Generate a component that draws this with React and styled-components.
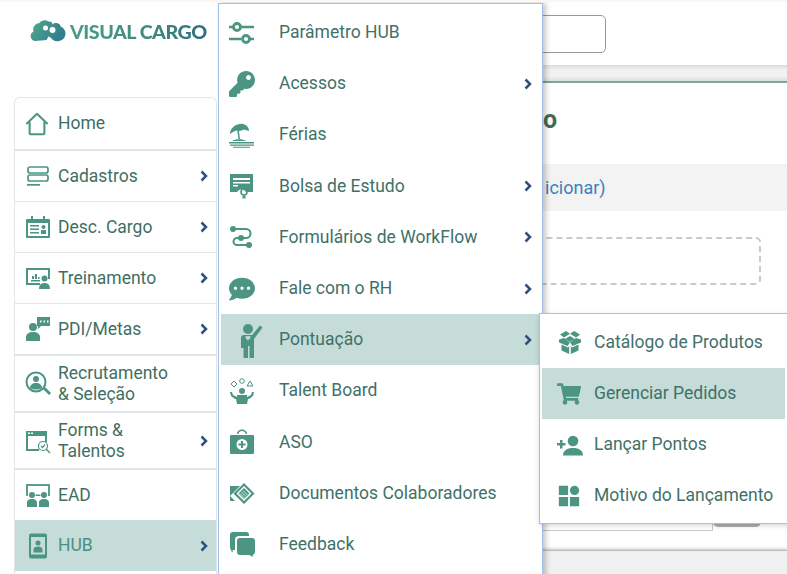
import React from "react";
import styled, { createGlobalStyle } from "styled-components";
import { FaKey, FaCommentDots, FaShoppingCart } from "react-icons/fa";

const ICON = "#4b9582";

const Svg = ({ children, size = 26 }) => (
  <svg width={size} height={size} viewBox="0 0 26 26" fill={ICON}>
    {children}
  </svg>
);

const HomeIcon = () => (
  <Svg size={24}>
    <path d="M1.500 13 13 2l11.500 11M5 10.500V23a1 1 0 0 0 1 1h14a1 1 0 0 0 1-1V10.500" fill="none" stroke={ICON} strokeWidth="2.200" strokeLinejoin="round" />
  </Svg>
);
const CadastrosIcon = () => (
  <Svg>
    <rect x="3" y="4" width="20" height="6" rx="2" fill="none" stroke={ICON} strokeWidth="1.700" />
    <rect x="3" y="12" width="20" height="6" rx="2" fill="none" stroke={ICON} strokeWidth="1.700" />
    <rect x="2" y="21" width="13" height="1.700" />
  </Svg>
);
const CargoIcon = () => (
  <Svg>
    <path d="M6 2h2v4H6zM18 2h2v4h-2z" />
    <path fillRule="evenodd" d="M2 5h22a1 1 0 0 1 1 1v17a1 1 0 0 1-1 1H2a1 1 0 0 1-1-1V6a1 1 0 0 1 1-1zm1 4v13h20V9z" />
    <path d="M5 11h9v1.500H5zM5 14.500h9V16H5zM5 18h9v1.500H5z" />
    <circle cx="18.500" cy="13" r="2" />
    <path d="M16 16h5v4h-5z" />
  </Svg>
);
const TreinoIcon = () => (
  <Svg>
    <path fillRule="evenodd" d="M1 3h24v11h-2V5H3v13h12v2H1z" />
    <path d="M6 15h9v1.500H6zM7 11h2v3H7zM10 9h2v5h-2zM13 12h1.500v2H13z" />
    <circle cx="19.500" cy="13.500" r="3" />
    <path d="M14 24c0-4 2-6 5.500-6s5.500 2 5.500 6z" />
  </Svg>
);
const PdiIcon = () => (
  <Svg>
    <circle cx="8" cy="11" r="4" />
    <path d="M1 25v-4c0-3 3-5 7-5s7 2 7 5v4z" />
    <path fillRule="evenodd" d="M12 1h13v9h-9l-3 3v-3h-1zm3 3.500v2h1.500v-2zm3.500 0v2H20v-2zm3.500 0v2h1.500v-2z" />
  </Svg>
);
const RecrutaIcon = () => (
  <Svg>
    <circle cx="11" cy="11" r="9.500" fill="none" stroke={ICON} strokeWidth="2" />
    <circle cx="11" cy="8" r="3" />
    <path d="M5 17c0-3 2.500-5 6-5s6 2 6 5c-3 2-9 2-12 0z" />
    <path d="m18 18 2-2 6 6-2 2z" />
  </Svg>
);
const FormsIcon = () => (
  <Svg>
    <path fillRule="evenodd" d="M1 3h21v11h-2V8H3v13h11v2H1zm2 1.500V6h2V4.500zm3 0V6h2V4.500z" />
    <circle cx="18" cy="18" r="4.500" fill="#fff" stroke={ICON} strokeWidth="1.200" />
    <path d="m16 18 1.500 1.500 2.500-3" fill="none" stroke={ICON} strokeWidth="1.200" />
    <path d="m21 21 4 4" stroke={ICON} strokeWidth="1.500" />
  </Svg>
);
const EadIcon = () => (
  <Svg>
    <path d="M1 2h24v12h-2V4H3v10H1z" opacity=".9" />
    <circle cx="7" cy="13" r="3" />
    <circle cx="19" cy="13" r="3" />
    <path d="M2 25v-4c0-3 2-4 5-4s5 1 5 4v4zM14 25v-4c0-3 2-4 5-4s5 1 5 4v4zM10.500 12.500h5V14h-5z" />
  </Svg>
);
const HubIcon = () => (
  <Svg>
    <path fillRule="evenodd" d="M6 .500h14a2 2 0 0 1 2 2v21a2 2 0 0 1-2 2H6a2 2 0 0 1-2-2v-21a2 2 0 0 1 2-2zM6 4v17.500h14V4z" />
    <circle cx="13" cy="10" r="2.500" />
    <path d="M8.500 19.500V16.500c0-2 2-3 4.500-3s4.500 1 4.500 3v3z" />
  </Svg>
);

const SlidersIcon = () => (
  <Svg>
    <path d="M10 5.800h15v2.500H10zM0 5.800h4v2.500H0zM0 17.800h12v2.500H0zM21 17.800h4v2.500h-4z" />
    <circle cx="8" cy="7" r="3.500" fill="none" stroke={ICON} strokeWidth="2.800" />
    <circle cx="17" cy="19" r="3.500" fill="none" stroke={ICON} strokeWidth="2.800" />
  </Svg>
);
const BeachIcon = () => (
  <Svg>
    <path d="M1 12C1 5 9 1 14 2c4 1 6 4 6 7l-5-1.500L11 9l-4-.500L4 10z" />
    <path d="m8 7 1.600-.3L11 17H9.500z" />
    <path d="M3 19c3-2.500 11-2.500 14 0z" />
    <path d="M0 20h25v1.400H0zM1 22.400h24v1.300H1zM4 24.700h17v1H4z" />
  </Svg>
);
const CertIcon = () => (
  <Svg>
    <path fillRule="evenodd" d="M1 1h23v18h-7a5 5 0 0 0-9 0H1zm3 4v2h17V5zm0 4v1.500h17V9zm0 3v1.500h5V12z" />
    <circle cx="15" cy="19" r="3" fill="none" stroke={ICON} strokeWidth="1.600" />
    <path d="M13.500 22.500h3V26l-1.500-1-1.500 1z" />
  </Svg>
);
const FlowIcon = () => (
  <Svg>
    <path d="M4 5h13a4.500 4.500 0 0 1 0 9H8a3.500 3.500 0 0 0 0 7h12" fill="none" stroke={ICON} strokeWidth="2" />
    <circle cx="4" cy="5" r="3" />
    <circle cx="12" cy="14" r="3" />
    <circle cx="20" cy="21" r="3" />
  </Svg>
);
const PointsIcon = () => (
  <svg width="34" height="36" viewBox="-8 0 34 36" fill={ICON}>
    <circle cx="11" cy="7" r="5" />
    <path d="M4 16q0-3 3-3h8L23 3.500l2.500 2L17 17v19h-4.500V24H11v12H6.500V26H4z" />
    <path d="M8.500 14.500c1-1 2.500-.5 2.500.3 0-.8 1.500-1.300 2.500-.3.600 1-1.200 2.800-2.500 3.700-1.300-.9-3.100-2.700-2.500-3.700z" fill="#c5dcd8" />
  </svg>
);
const TalentIcon = () => (
  <Svg>
    <path d="m5 3 3 3-3 3-3-3z" fill="none" stroke={ICON} strokeWidth="1" />
    <circle cx="13" cy="3" r="2.300" fill="none" stroke={ICON} strokeWidth="1" />
    <path d="m21 3 3 5h-6z" fill="none" stroke={ICON} strokeWidth="1" />
    <circle cx="13" cy="13" r="3" />
    <path d="M8 26v-7l-4-2-1-3H1l1 4 4 3h1zM18 26v-7l4-2 1-3h2l-1 4-4 3h-1zM8 17h10v9H8z" />
  </Svg>
);
const KitIcon = () => (
  <Svg>
    <path d="M8 5c0-6 10-6 10 0h-1.500c0-4-7-4-7 0z" />
    <path fillRule="evenodd" d="M2 6h22a1 1 0 0 1 1 1v17a1 1 0 0 1-1 1H2a1 1 0 0 1-1-1V7a1 1 0 0 1 1-1zm11 4a5.500 5.500 0 1 0 0 11 5.500 5.500 0 0 0 0-11zm-1 2h2v2.500h2.500v2H14V19h-2v-2.500H9.500v-2H12z" />
  </Svg>
);
const DocsIcon = () => (
  <Svg>
    <path d="M1 6h10L1 16zM1 16l5 5H1z" />
    <path fillRule="evenodd" d="m15 3 10.500 10.500L15 24 4.500 13.500zM15 6 7.500 13.500 15 21l7.500-7.500z" />
    <path d="m15 8 5.500 5.500L15 19l-5.500-5.500z" />
    <path d="m12.500 12 4.500 4.500M14 10.500l4.500 4.500M11 13.500l4.500 4.500" stroke="#fff" strokeWidth=".8" />
  </Svg>
);
const BubblesIcon = () => (
  <Svg>
    <path d="M4 1h13a3 3 0 0 1 3 3v1H10a4 4 0 0 0-4 4v10H4l-1 3-1-3.200A3 3 0 0 1 1 16V4a3 3 0 0 1 3-3z" />
    <path d="M11 7h12a3 3 0 0 1 3 3v11a3 3 0 0 1-2 2.800l-.5 2.200-3-2H11a3 3 0 0 1-3-3V10a3 3 0 0 1 3-3z" />
  </Svg>
);
const BoxIcon = () => (
  <Svg>
    <path d="M3 4.500 9 1l4 2.800-6 3.700zM23 4.500 17 1l-4 2.800 6 3.700zM13 6l5 3-5 3-5-3z" />
    <path d="M2 9.500 7 8l6 4.500L10.500 16 2 12.500zM24 9.500 19 8l-6 4.500 2.500 3.500 8.500-3.500z" />
    <path d="M4.500 14.500l6.500 3 1.200-1.500V24l-7.700-3.500zM21.500 14.500 15 17.500 13.800 16V24l7.700-3.500z" />
  </Svg>
);
const UserPlusIcon = () => (
  <Svg>
    <circle cx="16" cy="9" r="5.300" />
    <path d="M6 23.500c0-5 4-7.500 10-7.500s10 2.500 10 7.500z" />
    <path d="M0 11h3V8h2.500v3h3v2.500h-3v3H3v-3H0z" />
  </Svg>
);
const GridIcon = () => (
  <Svg size={24}>
    <path d="M2 2h10v10H2zM2 14h10v10H2zM14 14h10v10H14z" />
    <circle cx="19" cy="7" r="5" />
  </Svg>
);

const sideItems = [
  { label: "Home", icon: HomeIcon, height: 53, rule: 2 },
  { label: "Cadastros", icon: CadastrosIcon, more: true, height: 51, rule: 1 },
  { label: "Desc. Cargo", icon: CargoIcon, more: true, height: 51, rule: 1 },
  { label: "Treinamento", icon: TreinoIcon, more: true, height: 51, rule: 1 },
  { label: "PDI/Metas", icon: PdiIcon, more: true, height: 52, rule: 2 },
  { label: "Recrutamento\n& Seleção", icon: RecrutaIcon, height: 57, rule: 2 },
  { label: "Forms &\nTalentos", icon: FormsIcon, more: true, height: 57, rule: 2 },
  { label: "EAD", icon: EadIcon, height: 50, rule: 0 },
  { label: "HUB", icon: HubIcon, more: true, active: true, height: 51, rule: 0 },
];

const hubItems = [
  { label: "Parâmetro HUB", icon: SlidersIcon },
  { label: "Acessos", icon: () => <FaKey size={26} color={ICON} />, more: true },
  { label: "Férias", icon: BeachIcon },
  { label: "Bolsa de Estudo", icon: CertIcon, more: true },
  { label: "Formulários de WorkFlow", icon: FlowIcon, more: true },
  { label: "Fale com o RH", icon: () => <FaCommentDots size={26} color={ICON} />, more: true },
  { label: "Pontuação", icon: PointsIcon, more: true, active: true },
  { label: "Talent Board", icon: TalentIcon },
  { label: "ASO", icon: KitIcon },
  { label: "Documentos Colaboradores", icon: DocsIcon },
  { label: "Feedback", icon: BubblesIcon },
];

const pointItems = [
  { label: "Catálogo de Produtos", icon: BoxIcon },
  { label: "Gerenciar Pedidos", icon: () => <FaShoppingCart size={24} color={ICON} />, active: true },
  { label: "Lançar Pontos", icon: UserPlusIcon },
  { label: "Motivo do Lançamento", icon: GridIcon },
];

const Chevron = () => (
  <svg width="8" height="12" viewBox="0 0 8 12">
    <path d="M1.500 1.500 6 6l-4.500 4.500" fill="none" stroke="#2f5080" strokeWidth="2.500" />
  </svg>
);

export default function App() {
  return (
    <>
      <GlobalStyle />
      <Page>
        <TopBar>
          <Logo>
            <LogoMark viewBox="0 0 36 24">
              <defs>
                <linearGradient id="logoFill" x1="0" y1="0" x2="1" y2="0.4">
                  <stop offset="0" stopColor="#55a78d" />
                  <stop offset="1" stopColor="#2f7f8c" />
                </linearGradient>
              </defs>
              <path d="M5 22a5 5 0 0 1-2-9.500A6.500 6.500 0 0 1 9 4c2-3 6-3.500 9-1.500 3-.5 4 1 4 3 3-3 8-1 8 2 3 1 5 4 5 7a8 8 0 0 1-13 6c-2-2-3-3-4-3l-2 3.500z" fill="url(#logoFill)" />
              <circle cx="15" cy="9" r="2.500" fill="#fff" />
              <circle cx="22" cy="11" r="3" fill="#fff" />
              <circle cx="28" cy="7" r="1.500" fill="#2f7f8c" />
            </LogoMark>
            <LogoText>VISUAL CARGO</LogoText>
          </Logo>
          <SearchBox />
        </TopBar>
        <Body>
          <Sidebar>
            {sideItems.map((item) => (
              <SideRow key={item.label} $height={item.height} $rule={item.rule} $active={item.active}>
                <SideIcon><item.icon /></SideIcon>
                <SideLabel $active={item.active}>{item.label}</SideLabel>
                {item.more && <Chevron />}
              </SideRow>
            ))}
          </Sidebar>
          <Content>
            <Strip />
            <Heading>o</Heading>
            <Band>icionar)</Band>
            <DashedBox />
            <FormRow>
              <FormInput />
              <FormButton />
            </FormRow>
            <Footer />
          </Content>
        </Body>
        <HubMenu>
          {hubItems.map((item) => (
            <MenuRow key={item.label} $active={item.active}>
              <MenuIcon><item.icon /></MenuIcon>
              <MenuLabel>{item.label}</MenuLabel>
              {item.more && <Chevron />}
            </MenuRow>
          ))}
        </HubMenu>
        <PointsMenu>
          {pointItems.map((item) => (
            <SubRow key={item.label} $active={item.active}>
              <SubIcon><item.icon /></SubIcon>
              <MenuLabel>{item.label}</MenuLabel>
            </SubRow>
          ))}
        </PointsMenu>
      </Page>
    </>
  );
}

const GlobalStyle = createGlobalStyle`
  html, body {
    margin: 0;
    padding: 0;
    background: #fff;
    font-family: Roboto, "Liberation Sans", sans-serif;
  }
`;
const Page = styled.div`
  position: relative;
  width: 787px;
  height: 574px;
  overflow: hidden;
  background: #fff;
  border-top: 2px solid #fdf5f4;
  box-sizing: border-box;
`;
const TopBar = styled.div`
  height: 63px;
  display: flex;
  position: relative;
`;
const Logo = styled.div`
  display: flex;
  align-items: center;
  gap: 3px;
  height: 58px;
  padding-left: 30px;
`;
const LogoMark = styled.svg`
  width: 37px;
  height: 24px;
`;
const LogoText = styled.span`
  font-family: Lato, sans-serif;
  font-weight: 900;
  font-size: 19.700px;
  white-space: nowrap;
  letter-spacing: -0.5px;
  background: linear-gradient(90deg, #4b9c86 0%, #3f8f80 50%, #2f7180 100%);
  -webkit-background-clip: text;
  background-clip: text;
  color: transparent;
`;
const SearchBox = styled.div`
  position: absolute;
  left: 400px;
  top: 13px;
  width: 204px;
  height: 36px;
  border: 1px solid #999;
  border-radius: 5px;
`;
const Body = styled.div`
  display: flex;
  height: 509px;
`;
const Sidebar = styled.nav`
  flex: none;
  width: 201px;
  height: 520px;
  margin: 32px 0 0 14px;
  border: 1px solid #e2e6e6;
  border-bottom: 0;
  border-radius: 6px 6px 0 0;
  display: flex;
  flex-direction: column;
`;
const SideRow = styled.div`
  flex: none;
  display: flex;
  align-items: center;
  height: ${(p) => p.$height}px;
  padding: 0 8px 0 10px;
  box-sizing: border-box;
  border-bottom: ${(p) => p.$rule}px solid #e2e6e6;
  background: ${(p) => (p.$active ? "#c5dcd8" : "transparent")};
`;
const SideIcon = styled.span`
  flex: none;
  width: 33px;
  display: flex;
  align-items: center;
  justify-content: flex-start;
`;
const SideLabel = styled.span`
  flex: 1;
  white-space: pre-line;
  font-size: 17.500px;
  line-height: 21px;
  color: ${(p) => (p.$active ? "#4b8f80" : "#3f6f64")};
`;
const Content = styled.main`
  flex: 1;
  min-width: 0;
  margin-left: 5px;
  display: flex;
  flex-direction: column;
`;
const Strip = styled.div`
  flex: none;
  height: 16px;
  background: linear-gradient(#dcdcdc, #f1f1f1 30%, #f1f1f1 70%, #dedede);
  border-bottom: 2px solid #7ba793;
`;
const Heading = styled.h1`
  flex: none;
  box-sizing: border-box;
  margin: 0;
  height: 81px;
  padding: 0 0 8px 321px;
  display: flex;
  align-items: center;
  font-size: 25px;
  font-weight: 700;
  color: #466a55;
`;
const Band = styled.div`
  flex: none;
  height: 47px;
  padding-left: 323px;
  display: flex;
  align-items: center;
  background: #f3f3f3;
  color: #3c80bd;
  font-size: 18px;
`;
const DashedBox = styled.div`
  flex: none;
  height: 44px;
  margin: 26px 26px 0 0;
  border: 2px dashed #cacaca;
  border-radius: 5px;
`;
const FormRow = styled.div`
  flex: none;
  display: flex;
  height: 41px;
  margin: 205px 26px 0 0;
`;
const FormInput = styled.div`
  flex: 1;
  border: 1px solid #c9c9c9;
`;
const FormButton = styled.div`
  flex: none;
  width: 48px;
  height: 37px;
  background: #aeaeae;
  border-radius: 0 0 5px 5px;
`;
const Footer = styled.div`
  flex: 1;
  margin-top: 19px;
  border-top: 1px solid #bdbdbd;
  box-shadow: 0 -1px 3px rgba(0, 0, 0, 0.25);
  background: linear-gradient(105deg, #f7f8f8 0 40%, #eff0f0 40%);
`;
const HubMenu = styled.div`
  position: absolute;
  left: 218px;
  top: 1px;
  width: 325px;
  height: 580px;
  padding: 3px 0 0 2px;
  box-sizing: border-box;
  background: #fff;
  border: 1px solid #a4c0ea;
  box-shadow: 3px 0 5px rgba(0, 0, 0, 0.22);
`;
const MenuRow = styled.div`
  display: flex;
  align-items: center;
  height: 51.200px;
  padding: 0 10px 0 8px;
  background: ${(p) => (p.$active ? "#c5dcd8" : "transparent")};
`;
const MenuIcon = styled.span`
  flex: none;
  width: 50px;
  display: flex;
  align-items: center;
  justify-content: flex-start;
`;
const MenuLabel = styled.span`
  flex: 1;
  padding-bottom: 1px;
  font-size: 17.500px;
  white-space: nowrap;
  color: #3f7168;
`;
const PointsMenu = styled.div`
  position: absolute;
  left: 539px;
  top: 311px;
  width: 262px;
  padding: 3px 2px 2px;
  box-sizing: border-box;
  background: #fff;
  border: 1px solid #a4c0ea;
  box-shadow: 0 2px 5px rgba(0, 0, 0, 0.15);
`;
const SubRow = styled.div`
  display: flex;
  align-items: center;
  width: 243px;
  height: 51px;
  padding-left: 15px;
  box-sizing: border-box;
  background: ${(p) => (p.$active ? "#c5dcd8" : "transparent")};
`;
const SubIcon = styled.span`
  flex: none;
  width: 37px;
  display: flex;
  align-items: center;
  justify-content: flex-start;
`;
